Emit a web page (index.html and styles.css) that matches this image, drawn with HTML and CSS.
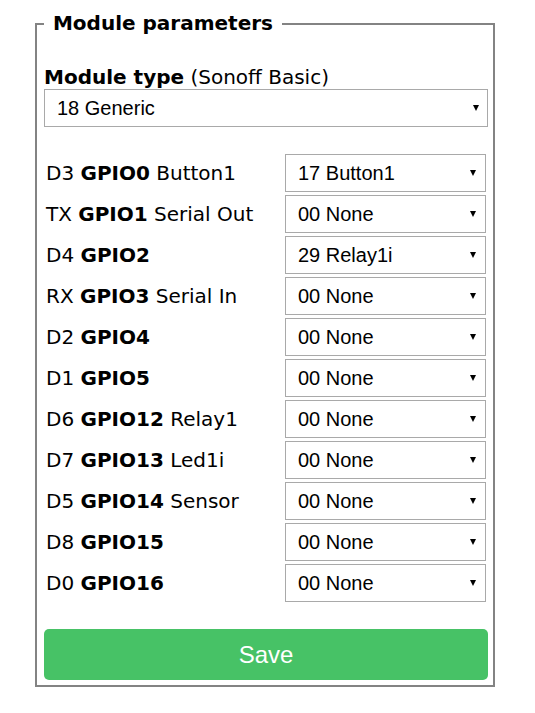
FILE: index.html
```html
<!DOCTYPE html>
<html lang="en">
<head>
<meta charset="utf-8">
<title>Module parameters</title>
<link rel="stylesheet" href="styles.css">
</head>
<body>
<div class="page">
  <fieldset class="panel">
    <legend class="panel-title">&nbsp;Module parameters&nbsp;</legend>
    <form class="form">
      <label class="type-label" for="g99"><b>Module type</b> (Sonoff Basic)</label>
      <div class="sel sel-wide"><select id="g99"><option>18 Generic</option></select></div>
      <div class="gpio">
        <label class="gpio-name">D3 <b>GPIO0</b> Button1</label>
        <div class="sel"><select><option>17 Button1</option></select></div>
        <label class="gpio-name">TX <b>GPIO1</b> Serial Out</label>
        <div class="sel"><select><option>00 None</option></select></div>
        <label class="gpio-name">D4 <b>GPIO2</b></label>
        <div class="sel"><select><option>29 Relay1i</option></select></div>
        <label class="gpio-name">RX <b>GPIO3</b> Serial In</label>
        <div class="sel"><select><option>00 None</option></select></div>
        <label class="gpio-name">D2 <b>GPIO4</b></label>
        <div class="sel"><select><option>00 None</option></select></div>
        <label class="gpio-name">D1 <b>GPIO5</b></label>
        <div class="sel"><select><option>00 None</option></select></div>
        <label class="gpio-name">D6 <b>GPIO12</b> Relay1</label>
        <div class="sel"><select><option>00 None</option></select></div>
        <label class="gpio-name">D7 <b>GPIO13</b> Led1i</label>
        <div class="sel"><select><option>00 None</option></select></div>
        <label class="gpio-name">D5 <b>GPIO14</b> Sensor</label>
        <div class="sel"><select><option>00 None</option></select></div>
        <label class="gpio-name">D8 <b>GPIO15</b></label>
        <div class="sel"><select><option>00 None</option></select></div>
        <label class="gpio-name">D0 <b>GPIO16</b></label>
        <div class="sel"><select><option>00 None</option></select></div>
      </div>
      <button class="save" type="button">Save</button>
    </form>
  </fieldset>
</div>
</body>
</html>
```

FILE: styles.css
```css
html, body {
  margin: 0;
  background: #fff;
}

body {
  font-family: "DejaVu Sans", Verdana, sans-serif;
  font-size: 20px;
  color: #000;
}

.page {
  padding: 12px 0 0 35px;
}

.panel {
  box-sizing: border-box;
  width: 460px;
  min-width: 0;
  margin: 0;
  border: 2px solid #838383;
  padding: 0 5px 5px 7px;
}

.panel-title {
  padding: 0 2px;
  font-weight: bold;
  line-height: 23px;
}

.form {
  display: flex;
  flex-direction: column;
}

.type-label {
  margin-top: 31px;
  line-height: 23px;
}

.sel {
  position: relative;
}

.sel select {
  -webkit-appearance: none;
  appearance: none;
  display: block;
  box-sizing: border-box;
  width: 100%;
  height: 38px;
  margin: 0;
  padding: 0 0 0 12px;
  border: 1px solid #a9a9a9;
  border-radius: 0;
  background: #fff;
  color: #000;
  font-family: "Liberation Sans", Arial, sans-serif;
  font-size: 20px;
}

.sel::after {
  content: "";
  position: absolute;
  right: 10px;
  top: 50%;
  margin-top: -3px;
  border-left: 3.5px solid transparent;
  border-right: 3.5px solid transparent;
  border-top: 6px solid #000;
  pointer-events: none;
}

.sel-wide::after {
  right: 9px;
}

.gpio {
  display: grid;
  grid-template-columns: 1fr 201px;
  column-gap: 2px;
  row-gap: 3px;
  padding: 0 2px;
  margin-top: 27px;
}

.gpio-name {
  align-self: center;
  line-height: 23px;
}

.save {
  margin-top: 27px;
  height: 51px;
  border: 0;
  border-radius: 5px;
  background: #47c266;
  color: #fff;
  font-family: "Liberation Sans", Arial, sans-serif;
  font-size: 24px;
}
```
